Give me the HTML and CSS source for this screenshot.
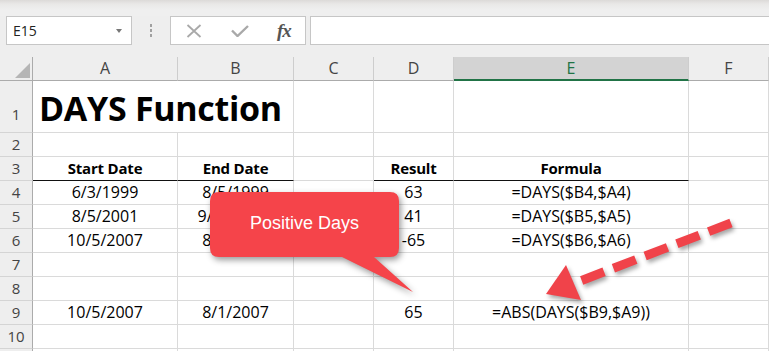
FILE: index.html
```html
<!DOCTYPE html>
<html>
<head>
<meta charset="utf-8">
<link rel="stylesheet" href="styles.css">
</head>
<body>
<div class="app">
  <div class="ribbon"></div>
  <div class="fbar">
    <div class="namebox"><span class="ref">E15</span><span class="caret"></span></div>
    <div class="grip"><i></i><i></i><i></i></div>
    <div class="fxbox">
      <svg class="ico" width="16" height="14" viewBox="0 0 16 14"><path d="M1.5 1 L14.5 13 M14.5 1 L1.5 13" stroke="#a9a9a9" stroke-width="1.8" fill="none"/></svg>
      <svg class="ico" width="18" height="12" viewBox="0 0 18 12"><path d="M1 5.5 L6.5 11 L17 1" stroke="#a9a9a9" stroke-width="2.4" fill="none"/></svg>
      <span class="fx">fx</span>
    </div>
    <div class="finput"></div>
  </div>
  <div class="sheet">
    <div class="corner"><svg width="33" height="24" viewBox="0 0 33 24"><polygon points="15,21 30,21 30,6" fill="#b5b5b5"/></svg></div>
    <div class="ch">A</div><div class="ch">B</div><div class="ch">C</div><div class="ch">D</div><div class="ch sel">E</div><div class="ch">F</div>

    <div class="rh r1">1</div><div class="c title">DAYS Function</div><div class="c"></div><div class="c"></div><div class="c"></div><div class="c"></div>

    <div class="rh">2</div><div class="c"></div><div class="c"></div><div class="c"></div><div class="c"></div><div class="c"></div><div class="c"></div>

    <div class="rh">3</div><div class="c b hl">Start Date</div><div class="c b hl">End Date</div><div class="c"></div><div class="c b hl">Result</div><div class="c b hl">Formula</div><div class="c"></div>

    <div class="rh">4</div><div class="c">6/3/1999</div><div class="c">8/5/1999</div><div class="c"></div><div class="c">63</div><div class="c">=DAYS($B4,$A4)</div><div class="c"></div>

    <div class="rh">5</div><div class="c">8/5/2001</div><div class="c">9/15/2001</div><div class="c"></div><div class="c">41</div><div class="c">=DAYS($B5,$A5)</div><div class="c"></div>

    <div class="rh">6</div><div class="c">10/5/2007</div><div class="c">8/1/2007</div><div class="c"></div><div class="c">-65</div><div class="c">=DAYS($B6,$A6)</div><div class="c"></div>

    <div class="rh">7</div><div class="c"></div><div class="c"></div><div class="c"></div><div class="c"></div><div class="c"></div><div class="c"></div>

    <div class="rh">8</div><div class="c"></div><div class="c"></div><div class="c"></div><div class="c"></div><div class="c"></div><div class="c"></div>

    <div class="rh">9</div><div class="c">10/5/2007</div><div class="c">8/1/2007</div><div class="c"></div><div class="c">65</div><div class="c">=ABS(DAYS($B9,$A9))</div><div class="c"></div>

    <div class="rh">10</div><div class="c"></div><div class="c"></div><div class="c"></div><div class="c"></div><div class="c"></div><div class="c"></div>

    <div class="rh"></div><div class="c"></div><div class="c"></div><div class="c"></div><div class="c"></div><div class="c"></div><div class="c"></div>
  </div>

  <svg class="overlay" width="769" height="351" viewBox="0 0 769 351">
    <path class="bubble" d="M219,192 H390 Q399,192 399,201 V248 Q399,257 390,257 H374 L413,292 L342,257 H219 Q210,257 210,248 V201 Q210,192 219,192 Z" fill="#f5444a"/>
    <g class="arrow">
      <line x1="731" y1="223" x2="575" y2="283" stroke="#f0434a" stroke-width="9" stroke-dasharray="24 10"/>
      <polygon points="546,294 566,265 581,300" fill="#f0434a"/>
    </g>
  </svg>
  <div class="callout-text">Positive Days</div>
</div>
</body>
</html>
```

FILE: styles.css
```css
* { box-sizing: border-box; }
html, body { margin: 0; padding: 0; }
body { width: 769px; height: 351px; overflow: hidden; background: #eeeeee; font-family: "Open Sans", "Noto Sans", sans-serif; }

.app { position: relative; width: 769px; height: 351px; display: flex; flex-direction: column; overflow: hidden; }

.ribbon { height: 16px; flex: none; background: linear-gradient(#dcdad8 0, #e9e8e7 4px, #efefef 10px, #efefef 100%); }

.fbar { height: 29px; flex: none; display: flex; align-items: stretch; padding-left: 6px; }
.namebox { width: 126px; background: #fff; border: 1px solid #c6c6c6; display: flex; align-items: center; justify-content: space-between; padding: 0 9px 0 6px; }
.namebox .ref { font-size: 14px; color: #222; }
.caret { width: 0; height: 0; border-left: 3px solid transparent; border-right: 3px solid transparent; border-top: 4px solid #777; }
.grip { width: 38px; display: flex; flex-direction: column; align-items: center; justify-content: center; gap: 2px; }
.grip i { display: block; width: 2px; height: 3px; background: #a0a0a0; }
.fxbox { width: 136px; background: #fff; border: 1px solid #c6c6c6; display: flex; align-items: center; padding-left: 15px; }
.fxbox .ico:first-child { margin-right: 29px; }
.fxbox .ico:nth-child(2) { margin-right: 28px; margin-top: 1px; }
.fx { font-family: "Liberation Serif", serif; font-style: italic; font-weight: bold; font-size: 19px; color: #555; letter-spacing: -1px; }
.finput { flex: 1; margin-left: 4px; background: #fff; border: 1px solid #c6c6c6; border-right: none; }

.sheet { flex: 1; min-height: 0; overflow: hidden; margin-top: 12px; display: grid; grid-template-columns: 33px 145px 116px 80px 80px 235px 80px; grid-template-rows: 24px 52px repeat(10, 24px); background: #fff; }

.corner { background: #eeeeee; border-right: 1px solid #ababab; border-bottom: 1px solid #ababab; }
.corner svg { display: block; }
.ch { background: #eeeeee; border-right: 1px solid #cdcdcd; border-bottom: 1px solid #ababab; text-align: center; font-size: 16px; line-height: 23px; color: #444; }
.ch.sel { background: #d3d3d3; color: #217346; border-bottom: 2px solid #217346; }

.rh { background: #eeeeee; border-right: 1px solid #ababab; border-bottom: 1px solid #d4d4d4; text-align: center; font-size: 15px; line-height: 23px; color: #444; }
.rh.r1 { display: flex; align-items: flex-end; justify-content: center; padding-bottom: 6px; }

.c { border-right: 1px solid #dadada; border-bottom: 1px solid #dadada; font-size: 16px; line-height: 23px; color: #000; text-align: center; white-space: nowrap; overflow: visible; }
.c.b { font-weight: bold; font-size: 15px; letter-spacing: -0.2px; }
.c.hl { border-bottom-color: #111; }
.c.title { grid-column: span 2; text-align: left; font-weight: bold; font-size: 34px; letter-spacing: -0.3px; line-height: 40px; padding-left: 6px; display: flex; align-items: flex-end; padding-bottom: 4px; }

.overlay { position: absolute; left: 0; top: 0; pointer-events: none; }
.bubble { filter: drop-shadow(2px 3px 3px rgba(0,0,0,0.4)); }
.arrow { filter: drop-shadow(2px 3px 2px rgba(0,0,0,0.35)); }

.callout-text { position: absolute; left: 210px; top: 192px; width: 189px; height: 65px; display: flex; align-items: center; justify-content: center; font-family: "Liberation Sans", Arial, sans-serif; font-size: 18px; color: #fff; padding-bottom: 3px; }
```
